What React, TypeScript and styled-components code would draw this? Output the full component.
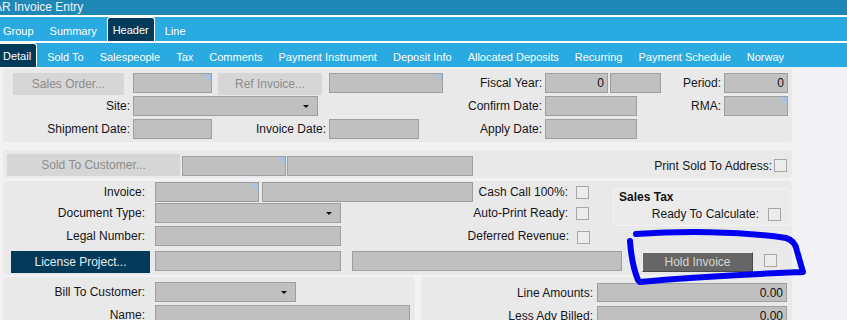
import React, { FC } from 'react';
import styled, { createGlobalStyle, css } from 'styled-components';

const GlobalStyle = createGlobalStyle`
	html, body {
		margin: 0;
		padding: 0;
		background: #f2f2f4;
		overflow: hidden;
	}
	body {
		font-family: 'Liberation Sans', Arial, sans-serif;
		font-size: 12px;
		color: #111;
	}
`;

const Page = styled.div`
	position: relative;
	width: 847px;
	height: 320px;
	overflow: hidden;
`;

const TitleBar = styled.div`
	height: 15px;
	background: #1f88b6;
	border-bottom: 2px solid #ffffff;
	color: #eef6fb;
	font-size: 12px;
	line-height: 15px;
	white-space: nowrap;
	overflow: hidden;
`;

const TitleText = styled.span`
	display: inline-block;
	margin-left: -6px;
`;

const TabBar = styled.div<{ $line?: boolean }>`
	height: 24px;
	background: #29aae1;
	display: flex;
	border-bottom: ${(p) => (p.$line ? '2px solid #ffffff' : 'none')};
`;

const TabStrip = styled.div`
	display: flex;
	gap: 4px;
	margin-left: -3px;
`;

const Tab = styled.div<{ $active?: boolean }>`
	display: flex;
	align-items: center;
	padding: 2px 5px 0;
	border: 1px solid transparent;
	border-bottom: none;
	border-radius: 3px 3px 0 0;
	color: #ffffff;
	font-size: 11px;
	white-space: nowrap;
	${(p) =>
		p.$active &&
		css`
			background: #033a5a;
			border-color: #ffffff;
			padding-top: 0;
		`}
`;

const Content = styled.div`
	display: flex;
	flex-direction: column;
	padding: 2px 0 0 3px;
`;

const Panel = styled.div<{ $pad: string; $w?: number; $mt?: number }>`
	width: ${(p) => p.$w ?? 789}px;
	box-sizing: border-box;
	background: #e9e9e9;
	border-radius: 4px;
	padding: ${(p) => p.$pad};
	margin-top: ${(p) => p.$mt ?? 0}px;
	display: flex;
	flex-direction: column;
	flex-shrink: 0;
`;

const Row = styled.div<{ $h: number; $align?: string }>`
	display: flex;
	align-items: ${(p) => p.$align ?? 'flex-start'};
	height: ${(p) => p.$h}px;
	flex-shrink: 0;
`;

const Label = styled.div<{ $w?: number; $pr?: number; $grow?: boolean }>`
	width: ${(p) => (p.$w ? `${p.$w}px` : 'auto')};
	flex: ${(p) => (p.$grow ? '1' : '0 0 auto')};
	box-sizing: border-box;
	padding-right: ${(p) => p.$pr ?? 3}px;
	text-align: right;
	line-height: 20px;
	font-size: 12px;
	color: #151520;
	white-space: nowrap;
`;

const Field = styled.div<{ $w: number; $ml?: number; $h?: number; $corner?: boolean; $mt?: number }>`
	position: relative;
	width: ${(p) => p.$w}px;
	height: ${(p) => p.$h ?? 20}px;
	margin-left: ${(p) => p.$ml ?? 0}px;
	margin-top: ${(p) => p.$mt ?? 0}px;
	box-sizing: border-box;
	background: #c0c0c0;
	border: 1px solid #9e9e9e;
	padding-right: 3px;
	text-align: right;
	line-height: 18px;
	font-size: 12px;
	color: #111;
	flex-shrink: 0;
	${(p) =>
		p.$corner &&
		css`
			&::after {
				content: '';
				position: absolute;
				top: 0;
				right: 0;
				border-style: solid;
				border-width: 0 8px 8px 0;
				border-color: transparent #a9c2de transparent transparent;
			}
		`}
`;

const Select = styled(Field)`
	&::after {
		content: '';
		position: absolute;
		right: 8px;
		top: 8px;
		border-left: 3px solid transparent;
		border-right: 3px solid transparent;
		border-top: 3px solid #111;
	}
`;

const Btn = styled.div<{ $kind: 'off' | 'dark' | 'hold'; $w: number; $ml?: number; $h?: number; $mt?: number }>`
	width: ${(p) => p.$w}px;
	height: ${(p) => p.$h ?? 22}px;
	margin-left: ${(p) => p.$ml ?? 0}px;
	margin-top: ${(p) => p.$mt ?? 0}px;
	box-sizing: border-box;
	display: flex;
	align-items: center;
	justify-content: center;
	font-size: 12px;
	white-space: nowrap;
	flex-shrink: 0;
	${(p) =>
		p.$kind === 'off' &&
		css`
			background: #d6d6d6;
			color: #8c8c8c;
		`}
	${(p) =>
		p.$kind === 'dark' &&
		css`
			background: #033a5a;
			color: #e6edf2;
		`}
	${(p) =>
		p.$kind === 'hold' &&
		css`
			background: #666666;
			color: #d6d6d6;
			border-top: 1px solid #eeeeee;
			border-left: 1px solid #eeeeee;
			border-right: 1px solid #4a4a4a;
			border-bottom: 1px solid #4a4a4a;
		`}
`;

const Check = styled.div<{ $ml?: number; $mt?: number }>`
	width: 13px;
	height: 13px;
	box-sizing: border-box;
	background: #ececec;
	border: 1px solid #a6a6a6;
	margin-left: ${(p) => p.$ml ?? 0}px;
	margin-top: ${(p) => p.$mt ?? 0}px;
	flex-shrink: 0;
`;

const CenterCheck = styled(Check)`
	align-self: center;
`;

const TopPart = styled.div`
	display: flex;
`;

const LeftBlock = styled.div`
	width: 610px;
	display: flex;
	flex-direction: column;
`;

const SubPanel = styled.div`
	width: 178px;
	height: 38px;
	margin-top: 6px;
	box-sizing: border-box;
	border: 1px solid #f3f3f3;
	border-radius: 4px;
	background: #ebebeb;
	padding: 1px 0 0 5px;
	display: flex;
	flex-direction: column;
`;

const SubTitle = styled.div`
	font-weight: bold;
	font-size: 12px;
	line-height: 14px;
	color: #111;
`;

const BottomRow = styled.div`
	display: flex;
	gap: 6px;
	margin-top: 2px;
`;

const Scribble = styled.svg`
	position: absolute;
	left: 0;
	top: 0;
	pointer-events: none;
`;

const App: FC = () => {
	return (
		<Page>
			<GlobalStyle />
			<TitleBar>
				<TitleText>{'AR Invoice Entry'}</TitleText>
			</TitleBar>
			<TabBar $line={true}>
				<TabStrip>
					<Tab>{'Group'}</Tab>
					<Tab>{'Summary'}</Tab>
					<Tab $active={true}>{'Header'}</Tab>
					<Tab>{'Line'}</Tab>
				</TabStrip>
			</TabBar>
			<TabBar>
				<TabStrip>
					<Tab $active={true}>{'Detail'}</Tab>
					<Tab>{'Sold To'}</Tab>
					<Tab>{'Salespeople'}</Tab>
					<Tab>{'Tax'}</Tab>
					<Tab>{'Comments'}</Tab>
					<Tab>{'Payment Instrument'}</Tab>
					<Tab>{'Deposit Info'}</Tab>
					<Tab>{'Allocated Deposits'}</Tab>
					<Tab>{'Recurring'}</Tab>
					<Tab>{'Payment Schedule'}</Tab>
					<Tab>{'Norway'}</Tab>
				</TabStrip>
			</TabBar>

			<Content>
				<Panel $pad={'4px 0 3px 10px'}>
					<Row $h={23}>
						<Btn $kind={'off'} $w={111}>{'Sales Order...'}</Btn>
						<Field $w={79} $ml={9} $corner={true} />
						<Btn $kind={'off'} $w={104} $ml={6}>{'Ref Invoice...'}</Btn>
						<Field $w={114} $ml={7} $corner={true} />
						<Label $w={102}>{'Fiscal Year:'}</Label>
						<Field $w={63}>{'0'}</Field>
						<Field $w={51} $ml={2} />
						<Label $w={63}>{'Period:'}</Label>
						<Field $w={64}>{'0'}</Field>
					</Row>
					<Row $h={23}>
						<Label $w={120}>{'Site:'}</Label>
						<Select $w={185} />
						<Label $w={227}>{'Confirm Date:'}</Label>
						<Field $w={92} />
						<Label $w={87}>{'RMA:'}</Label>
						<Field $w={64} $corner={true} />
					</Row>
					<Row $h={20}>
						<Label $w={120}>{'Shipment Date:'}</Label>
						<Field $w={79} />
						<Label $w={117}>{'Invoice Date:'}</Label>
						<Field $w={90} />
						<Label $w={126}>{'Apply Date:'}</Label>
						<Field $w={92} />
					</Row>
				</Panel>

				<Panel $pad={'4px 5px 2px 4px'} $mt={8}>
					<Row $h={22} $align={'flex-end'}>
						<Btn $kind={'off'} $w={173}>{'Sold To Customer...'}</Btn>
						<Field $w={104} $ml={2} $corner={true} />
						<Field $w={186} $ml={1} />
						<Label $grow={true} $pr={2}>{'Print Sold To Address:'}</Label>
						<CenterCheck />
					</Row>
				</Panel>

				<Panel $pad={'1px 1px 2px 0'} $mt={3}>
					<TopPart>
						<LeftBlock>
							<Row $h={21}>
								<Label $w={152} $pr={10}>{'Invoice:'}</Label>
								<Field $w={104} $corner={true} />
								<Field $w={211} $ml={3} />
								<Label $w={103} $pr={8}>{'Cash Call 100%:'}</Label>
								<Check $mt={4} />
							</Row>
							<Row $h={23}>
								<Label $w={152} $pr={10}>{'Document Type:'}</Label>
								<Select $w={186} />
								<Label $w={235} $pr={8}>{'Auto-Print Ready:'}</Label>
								<Check $mt={4} />
							</Row>
							<Row $h={25}>
								<Label $w={152} $pr={10}>{'Legal Number:'}</Label>
								<Field $w={186} />
								<Label $w={236} $pr={8}>{'Deferred Revenue:'}</Label>
								<Check $mt={5} />
							</Row>
						</LeftBlock>
						<SubPanel>
							<SubTitle>{'Sales Tax'}</SubTitle>
							<Row $h={20} $align={'center'}>
								<Label $w={149} $pr={9}>{'Ready To Calculate:'}</Label>
								<Check />
							</Row>
						</SubPanel>
					</TopPart>
					<Row $h={22}>
						<Btn $kind={'dark'} $w={139} $ml={8}>{'License Project...'}</Btn>
						<Field $w={186} $ml={5} />
						<Field $w={270} $ml={11} />
						<Btn $kind={'hold'} $w={111} $h={20} $ml={20} $mt={1}>{'Hold Invoice'}</Btn>
						<Check $ml={11} $mt={3} />
					</Row>
				</Panel>

				<BottomRow>
					<Panel $pad={'5px 0 0 0'} $w={412}>
						<Row $h={23}>
							<Label $w={152} $pr={10}>{'Bill To Customer:'}</Label>
							<Select $w={141} />
						</Row>
						<Row $h={20}>
							<Label $w={152} $pr={10}>{'Name:'}</Label>
							<Field $w={255} />
						</Row>
					</Panel>
					<Panel $pad={'6px 0 0 0'} $w={371}>
						<Row $h={23}>
							<Label $w={176} $pr={4}>{'Line Amounts:'}</Label>
							<Field $w={190} $h={19}>{'0.00'}</Field>
						</Row>
						<Row $h={20}>
							<Label $w={176} $pr={4}>{'Less Adv Billed:'}</Label>
							<Field $w={190} $h={19}>{'0.00'}</Field>
						</Row>
					</Panel>
				</BottomRow>
			</Content>

			<Scribble width={847} height={320} viewBox={'0 0 847 320'}>
				<path
					d={'M 636 234 C 680 231, 740 231, 786 238 C 793 240, 796 245, 797 251 L 803 272 C 780 273, 700 276, 640 282'}
					fill={'none'}
					stroke={'#0000f0'}
					strokeWidth={6}
					strokeLinecap={'round'}
					strokeLinejoin={'round'}
				/>
				<path
					d={'M 630 241 C 631 255, 633 268, 638 280'}
					fill={'none'}
					stroke={'#0000f0'}
					strokeWidth={6}
					strokeLinecap={'round'}
				/>
			</Scribble>
		</Page>
	);
};

export default App;
